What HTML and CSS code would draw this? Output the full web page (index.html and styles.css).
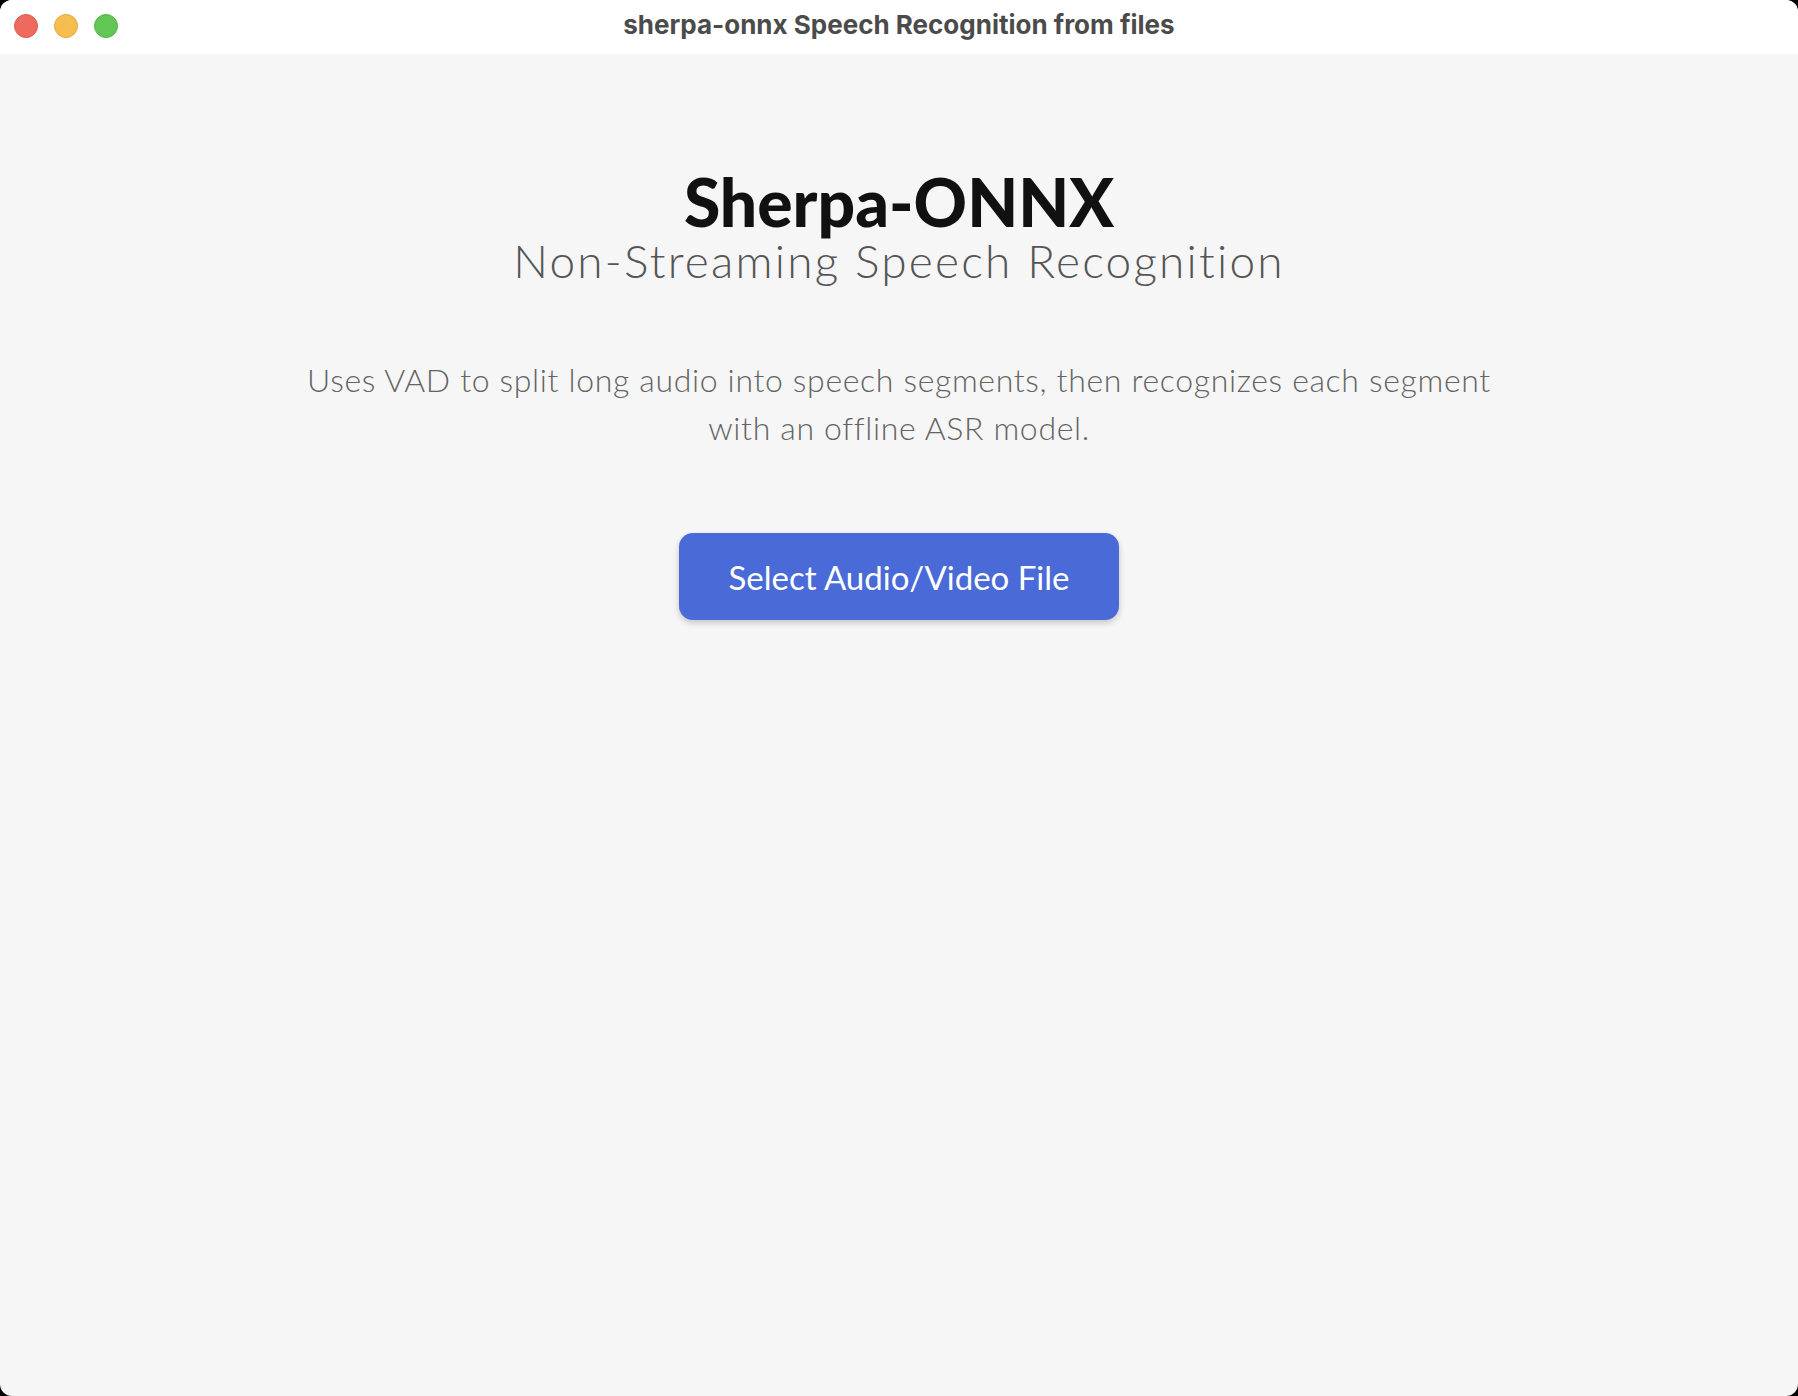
FILE: index.html
```html
<!DOCTYPE html>
<html>
<head>
<meta charset="utf-8">
<title>sherpa-onnx Speech Recognition from files</title>
<link rel="stylesheet" href="styles.css">
</head>
<body>
<div class="window">
  <header class="titlebar">
    <div class="lights">
      <span class="light red"></span>
      <span class="light yellow"></span>
      <span class="light green"></span>
    </div>
    <div class="title">sherpa-onnx Speech Recognition from files</div>
  </header>
  <main class="content">
    <h1 class="heading">Sherpa-ONNX</h1>
    <h2 class="subheading">Non-Streaming Speech Recognition</h2>
    <p class="desc">Uses VAD to split long audio into speech segments, then recognizes each segment with an offline ASR model.</p>
    <button class="select-btn">Select Audio/Video File</button>
  </main>
</div>
</body>
</html>
```

FILE: styles.css
```css
html, body {
  margin: 0;
  padding: 0;
  height: 100%;
  background: #000;
}
.window {
  height: 100%;
  background: #f6f6f6;
  border-radius: 12px;
  overflow: hidden;
  display: flex;
  flex-direction: column;
}
.titlebar {
  height: 54px;
  flex: 0 0 54px;
  background: #ffffff;
  position: relative;
  display: flex;
  align-items: center;
  justify-content: center;
}
.lights {
  position: absolute;
  left: 14px;
  top: 14px;
  display: flex;
  gap: 16px;
}
.light {
  width: 24px;
  height: 24px;
  border-radius: 50%;
  box-sizing: border-box;
}
.red { background: #ee6a5f; border: 1px solid #e05a4f; }
.yellow { background: #f5be4f; border: 1px solid #e2aa3c; }
.green { background: #62c655; border: 1px solid #52b445; }
.title {
  font-family: Inter, "Liberation Sans", sans-serif;
  font-weight: 700;
  font-size: 26px;
  color: #4b4b4b;
  margin-top: -5px;
}
.content {
  display: flex;
  flex-direction: column;
  align-items: center;
  padding-top: 115px;
  font-family: Lato, "Noto Sans", sans-serif;
}
.heading {
  margin: 0;
  font-size: 66px;
  line-height: 66px;
  font-weight: 900;
  color: #111111;
}
.subheading {
  margin: 1px 0 0;
  font-size: 46px;
  line-height: 50px;
  font-weight: 300;
  letter-spacing: 2.2px;
  color: #555555;
}
.desc {
  margin: 70px 0 0;
  max-width: 1200px;
  text-align: center;
  font-size: 32px;
  line-height: 48px;
  font-weight: 300;
  letter-spacing: 0.65px;
  color: #646464;
}
.select-btn {
  margin-top: 81px;
  height: 87px;
  padding: 0 50px;
  border: none;
  border-radius: 14px;
  background: #4a6bd7;
  color: #ffffff;
  font-family: Lato, "Noto Sans", sans-serif;
  font-size: 33px;
  font-weight: 400;
  box-shadow: 0 3px 6px rgba(0, 0, 0, 0.2);
  cursor: pointer;
}
```
